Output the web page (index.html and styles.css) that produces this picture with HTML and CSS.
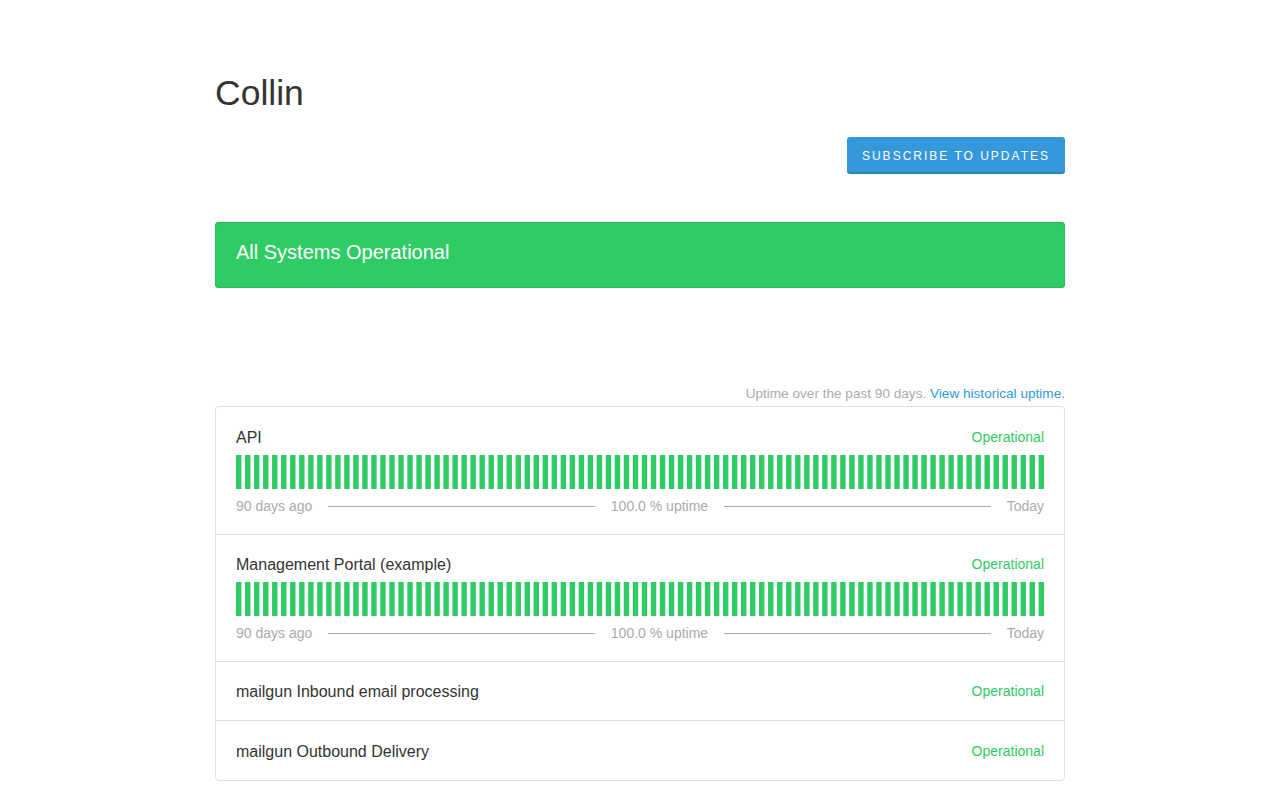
FILE: index.html
```html
<!DOCTYPE html>
<html>
<head>
<meta charset="utf-8">
<link rel="stylesheet" href="styles.css">
</head>
<body>
<div class="container">
  <header class="page-header">
    <h1 class="page-name">Collin</h1>
    <div class="header-actions">
      <button class="subscribe-btn">Subscribe to Updates</button>
    </div>
  </header>

  <div class="page-status">
    <span class="status-text">All Systems Operational</span>
  </div>

  <div class="uptime-note">Uptime over the past 90 days. <a href="#" class="uptime-link">View historical uptime.</a></div>

  <div class="components">
    <div class="component">
      <div class="component-head">
        <span class="component-name">API</span>
        <span class="component-status">Operational</span>
      </div>
      <div class="bars" id="bars1"></div>
      <div class="legend">
        <span class="legend-item">90 days ago</span>
        <span class="legend-spacer"></span>
        <span class="legend-item">100.0 % uptime</span>
        <span class="legend-spacer"></span>
        <span class="legend-item">Today</span>
      </div>
    </div>
    <div class="component">
      <div class="component-head">
        <span class="component-name">Management Portal (example)</span>
        <span class="component-status">Operational</span>
      </div>
      <div class="bars" id="bars2"></div>
      <div class="legend">
        <span class="legend-item">90 days ago</span>
        <span class="legend-spacer"></span>
        <span class="legend-item">100.0 % uptime</span>
        <span class="legend-spacer"></span>
        <span class="legend-item">Today</span>
      </div>
    </div>
    <div class="component compact">
      <div class="component-head">
        <span class="component-name">mailgun Inbound email processing</span>
        <span class="component-status">Operational</span>
      </div>
    </div>
    <div class="component compact">
      <div class="component-head">
        <span class="component-name">mailgun Outbound Delivery</span>
        <span class="component-status">Operational</span>
      </div>
    </div>
  </div>
</div>
<script src="script.js"></script>
</body>
</html>
```

FILE: script.js
```js
(function () {
  var ns = "http://www.w3.org/2000/svg";
  ["bars1", "bars2"].forEach(function (id) {
    var host = document.getElementById(id);
    var svg = document.createElementNS(ns, "svg");
    svg.setAttribute("viewBox", "0 0 448 34");
    svg.setAttribute("preserveAspectRatio", "none");
    svg.setAttribute("class", "bars-svg");
    for (var i = 0; i < 90; i++) {
      var r = document.createElementNS(ns, "rect");
      r.setAttribute("x", i * 5);
      r.setAttribute("y", 0);
      r.setAttribute("width", 3);
      r.setAttribute("height", 34);
      r.setAttribute("class", "bar");
      svg.appendChild(r);
    }
    host.appendChild(svg);
  });
})();
```

FILE: styles.css
```css
* { box-sizing: border-box; }
html, body { margin: 0; padding: 0; background: #fff; }
body {
  font-family: "Liberation Sans", Arial, sans-serif;
  color: #333;
  font-size: 16px;
}
.container {
  width: 850px;
  margin: 0 auto;
  padding-top: 71px;
}
.page-header {
  display: flex;
  flex-direction: column;
}
.page-name {
  margin: 0;
  font-size: 35.5px;
  font-weight: 400;
  line-height: 44px;
  color: #333;
}
.header-actions {
  display: flex;
  justify-content: flex-end;
  margin-top: 22px;
}
.subscribe-btn {
  font-family: "Liberation Sans", Arial, sans-serif;
  background: #3498db;
  color: #fff;
  border: none;
  border-bottom: 2px solid #2b82bd;
  border-radius: 3px;
  height: 37px;
  padding: 2px 15px 0;
  font-size: 12px;
  letter-spacing: 2px;
  text-transform: uppercase;
  cursor: pointer;
}
.page-status {
  margin-top: 48px;
  background: #2fcc66;
  border: 1px solid #29b95b;
  border-radius: 3px;
  height: 66px;
  padding: 17px 20px 15px;
}
.status-text {
  color: #fff;
  font-size: 20px;
  line-height: 24px;
}
.uptime-note {
  margin-top: 97px;
  text-align: right;
  font-size: 13.6px;
  line-height: 18px;
  color: #aaa;
}
.uptime-link {
  color: #3498db;
  text-decoration: none;
}
.components {
  margin-top: 3px;
  border: 1px solid #e0e0e0;
  border-radius: 4px;
}
.component {
  padding: 18px 20px 18px;
  border-top: 1px solid #e0e0e0;
}
.component:first-child { border-top: none; padding-top: 19px; }
.component.compact { padding: 18px 20px 16px; }
.component.compact:last-child { padding: 19px 20px 16px; }
.component-head {
  display: flex;
  justify-content: space-between;
  align-items: center;
  line-height: 24px;
}
.component-name {
  font-size: 16px;
  color: #333;
}
.component-status {
  font-size: 14px;
  line-height: 22px;
  align-self: flex-start;
  color: #2fcc66;
}
.bars {
  margin-top: 5px;
  height: 34px;
}
.bars-svg {
  display: block;
  width: 100%;
  height: 34px;
}
.bar { fill: #2fcc66; }
.legend {
  display: flex;
  align-items: center;
  margin-top: 7px;
  line-height: 20px;
  font-size: 14px;
  color: #aaa;
}
.legend-spacer {
  flex: 1;
  height: 1px;
  background: #aaa;
  margin: 0 16px;
}
```
